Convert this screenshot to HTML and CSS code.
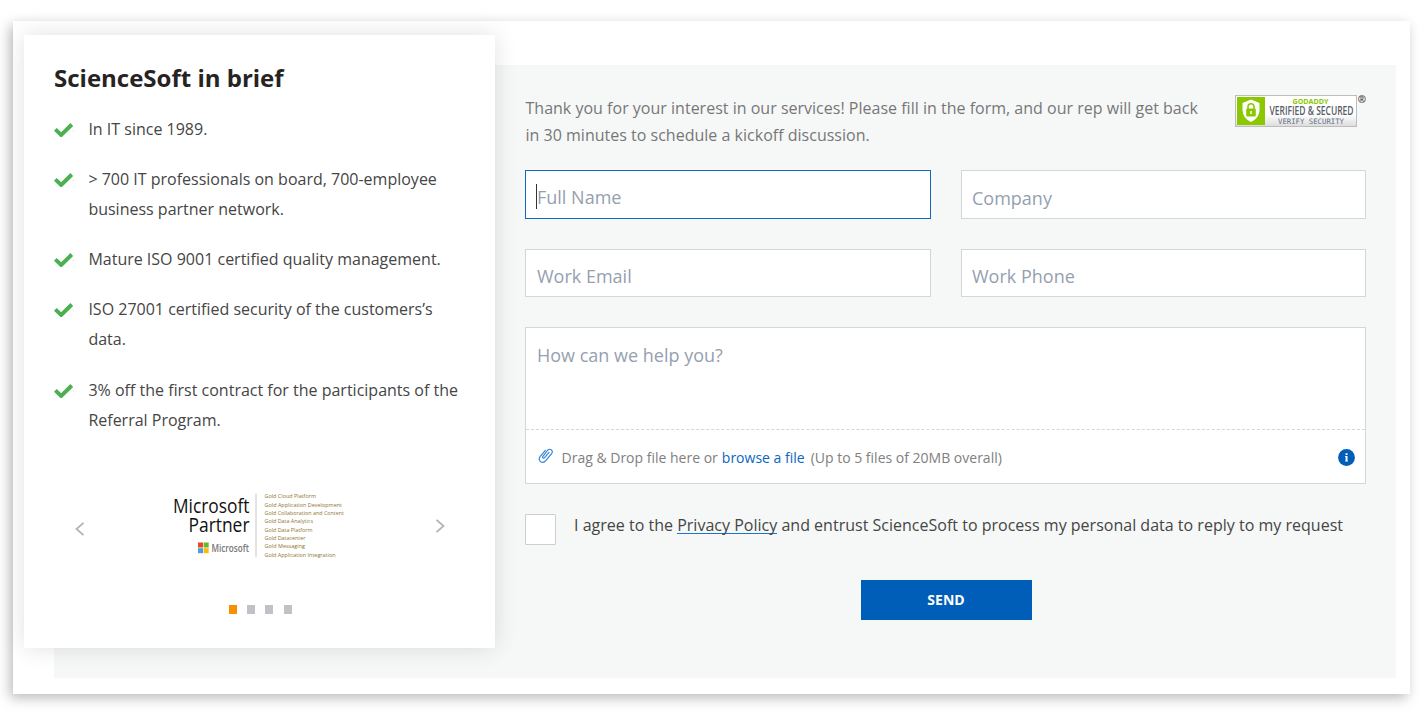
FILE: index.html
```html
<!DOCTYPE html>
<html lang="en">
<head>
<meta charset="utf-8">
<title>ScienceSoft contact form</title>
<link rel="stylesheet" href="styles.css">
</head>
<body>
<svg width="0" height="0" class="defs">
  <symbol id="check" viewBox="0 0 20 14"><path d="M1.300 6.300 7.200 12 17.800 1.500" fill="none" stroke="#4caf50" stroke-width="3.900"/><path d="M19.400 7.200v1" stroke="#a5d7a7" stroke-width=".7"/></symbol>
</svg>
<main class="frame">
  <section class="panel">
    <header class="intro">
      <p class="intro-text">Thank you for your interest in our services! Please fill in the form, and our rep will get back<br>in 30 minutes to schedule a kickoff discussion.</p>
      <svg class="seal" width="132" height="33" viewBox="0 0 132 33">
        <defs><linearGradient id="sg" x1="0" y1="0" x2="0" y2="1"><stop offset="0" stop-color="#fff"/><stop offset=".6" stop-color="#fff"/><stop offset="1" stop-color="#dcdcdc"/></linearGradient></defs>
        <rect x=".5" y=".5" width="121" height="31" fill="url(#sg)" stroke="#bdbdbd"/>
        <rect x="2" y="2" width="28" height="28" fill="#8cc800"/>
        <path d="M16 4.500 24.500 8v7.500q-.6 8-8.500 11.500Q8 23.500 7.500 15.500V8z" fill="#fff"/>
        <rect x="11.200" y="13.500" width="9.600" height="8" rx="1" fill="#8cc800"/>
        <path d="M13 14v-2.200a3 3 0 0 1 6 0V14" fill="none" stroke="#8cc800" stroke-width="1.600"/>
        <path d="M16 16v3" stroke="#fff" stroke-width="1.400"/>
        <text x="57.500" y="8.800" class="s1" textLength="36" lengthAdjust="spacingAndGlyphs">GODADDY</text>
        <text x="34.500" y="20" class="s2" textLength="84" lengthAdjust="spacingAndGlyphs">VERIFIED &amp; SECURED</text>
        <text x="43" y="28.700" class="s3" textLength="66" lengthAdjust="spacingAndGlyphs">VERIFY SECURITY</text>
        <text x="122.700" y="8.300" class="s4">®</text>
      </svg>
    </header>
    <div class="fields">
      <div class="field focus"><i class="caret"></i><span>Full Name</span></div>
      <div class="field"><span>Company</span></div>
      <div class="field"><span>Work Email</span></div>
      <div class="field"><span>Work Phone</span></div>
    </div>
    <div class="message">
      <div class="message-text">How can we help you?</div>
      <div class="upload">
        <svg class="clip" width="16" height="17" viewBox="0 0 16 17"><path d="M11 5.400 6.600 10.700c-1 1.200-2.700 0-1.700-1.300L9.500 3.400c2.100-2.600 6.200.1 4.300 2.900l-6 7.400c-3 3.600-8.600.3-5.900-3.800L7.300 3.400" fill="none" stroke="#3583d2" stroke-width="1.150" stroke-linecap="round"/></svg>
        <span>Drag &amp; Drop file here or</span>
        <a>browse a file</a>
        <span>(Up to 5 files of 20MB overall)</span>
        <svg class="info" width="17" height="17" viewBox="0 0 17 17"><circle cx="8.500" cy="8.500" r="8.400" fill="#005eb8"/><path d="M7.600 4.200h1.900v1.700H7.600zM7.100 7h2.400v4.400h.4v1.100H7.200v-1.100h.4V8.100h-.5z" fill="#fff"/></svg>
      </div>
    </div>
    <div class="consent"><span class="box"></span><p>I agree to the <a>Privacy Policy</a> and entrust ScienceSoft to process my personal data to reply to my request</p></div>
    <button class="send">SEND</button>
  </section>

  <aside class="card">
    <h2>ScienceSoft in brief</h2>
    <ul>
      <li><svg width="20" height="14"><use href="#check"/></svg><p>In IT since 1989.</p></li>
      <li><svg width="20" height="14"><use href="#check"/></svg><p>&gt; 700 IT professionals on board, 700-employee<br>business partner network.</p></li>
      <li><svg width="20" height="14"><use href="#check"/></svg><p>Mature ISO 9001 certified quality management.</p></li>
      <li><svg width="20" height="14"><use href="#check"/></svg><p>ISO 27001 certified security of the customers’s<br>data.</p></li>
      <li><svg width="20" height="14"><use href="#check"/></svg><p>3% off the first contract for the participants of the<br>Referral Program.</p></li>
    </ul>
    <div class="slider">
      <svg class="prev" width="10" height="16" viewBox="0 0 10 16"><path d="M8.500 1.800 1.500 8l7 6.200" fill="none" stroke="#b4b4b4" stroke-width="1.800"/></svg>
      <svg class="logo" width="176" height="68" viewBox="0 0 176 68">
        <g class="ms">
          <text x="1" y="21.600" textLength="76.500" lengthAdjust="spacingAndGlyphs">Microsoft</text>
          <text x="16.500" y="40.600" textLength="61" lengthAdjust="spacingAndGlyphs">Partner</text>
        </g>
        <path fill="#e8481f" d="M26 51.500h5.100v5H26z"/><path fill="#6db52d" d="M31.700 51.500h5v5h-5z"/><path fill="#4f9be0" d="M26 57.200h5.100v5H26z"/><path fill="#fbbc09" d="M31.700 57.200h5v5h-5z"/>
        <text x="39.500" y="60.700" class="msgrey" textLength="37.500" lengthAdjust="spacingAndGlyphs">Microsoft</text>
        <path d="M84 2.500v63.500" stroke="#dcdcdc" stroke-width="1.600"/>
        <g class="gold">
          <text x="92.500" y="7" textLength="51.500" lengthAdjust="spacingAndGlyphs">Gold Cloud Platform</text>
          <text x="92.500" y="15.500" textLength="77.500" lengthAdjust="spacingAndGlyphs">Gold Application Development</text>
          <text x="92.500" y="24" textLength="79.500" lengthAdjust="spacingAndGlyphs">Gold Collaboration and Content</text>
          <text x="92.500" y="32.200" textLength="48.500" lengthAdjust="spacingAndGlyphs">Gold Data Analytics</text>
          <text x="92.500" y="40.500" textLength="48" lengthAdjust="spacingAndGlyphs">Gold Data Platform</text>
          <text x="92.500" y="48.900" textLength="41" lengthAdjust="spacingAndGlyphs">Gold Datacenter</text>
          <text x="92.500" y="57.200" textLength="40.500" lengthAdjust="spacingAndGlyphs">Gold Messaging</text>
          <text x="92.500" y="65.500" textLength="71" lengthAdjust="spacingAndGlyphs">Gold Application Integration</text>
        </g>
      </svg>
      <svg class="next" width="10" height="16" viewBox="0 0 10 16"><path d="M1.500 1.800 8.500 8l-7 6.200" fill="none" stroke="#b4b4b4" stroke-width="1.800"/></svg>
    </div>
    <div class="dots"><i class="on"></i><i></i><i></i><i></i></div>
  </aside>
</main>
</body>
</html>
```
FILE: styles.css
```css
* { box-sizing: border-box; }
body { margin: 0; padding: 21px 13px 20px; height: 714px; background: #fff; font-family: "Open Sans", sans-serif; overflow: hidden; }
p, h2, ul { margin: 0; padding: 0; font-weight: 400; }
svg { display: block; flex: none; }
.defs { position: absolute; }

.frame { display: grid; grid-template-columns: 30px 441px 1fr; grid-template-rows: 30px 583px 30px; padding: 14px 14px 16px 11px; width: 1397px; background: #fff; box-shadow: -3px 4px 12px rgba(0, 0, 0, .27); }

.card { grid-area: 1 / 1 / 3 / 3; padding: 28px 30px 0; background: #fff; box-shadow: 0 0 22px rgba(0, 0, 0, .12); }
.card h2 { font-size: 24px; font-weight: 700; line-height: 30px; color: #262322; white-space: nowrap; }
.card ul { list-style: none; margin-top: 21px; display: flex; flex-direction: column; gap: 20px; }
.card li { display: flex; gap: 14px; font-size: 16px; line-height: 30.100px; color: #454545; white-space: nowrap; }
.card li svg { margin-top: 9px; }
.card li p { padding-left: .4px; }

.slider { display: flex; align-items: flex-start; margin: 56px 0 0 20px; }
.prev { margin: 30px 0 0 1px; }
.logo { margin-left: 87px; }
.next { margin: 27px 0 0 87px; }
.ms { fill: #111; font-size: 20px; }
.msgrey { font-size: 10px; fill: #777; font-weight: 600; }
.gold { font-size: 5.600px; fill: #8f7530; }
.dots { display: flex; gap: 10.200px; margin: 46px 0 0 175px; }
.dots i { width: 8px; height: 9px; background: #bfc2c7; }
.dots .on { background: #f79102; }

.panel { grid-area: 2 / 2 / 4 / 4; padding: 29px 30px 0 471px; background: #f6f8f7; }
.intro { display: flex; justify-content: space-between; height: 76px; }
.intro-text { padding: 1px 0 0 .5px; font-size: 16px; letter-spacing: .01px; line-height: 27px; color: #777; white-space: nowrap; }
.seal { margin: 1px -1px 0 0; overflow: visible; }
.s1 { font-size: 7px; font-weight: 700; fill: #8cc800; }
.s2 { font-size: 12px; font-weight: 600; fill: #555b66; }
.s3 { font-size: 7.500px; fill: #667086; font-family: "DejaVu Sans Mono", monospace; }
.s4 { font-size: 10px; font-weight: 700; fill: #444; }

.fields { display: grid; grid-template-columns: 1fr 1fr; gap: 30px; grid-template-rows: 49px 48px; }
.field, .message { background: #fff; border: 1px solid #d3d7db; }
.field { display: flex; align-items: center; padding: 6px 10px 0 11px; font-size: 18px; line-height: 26px; color: #959faf; }
.field:nth-child(even) { padding-left: 10.500px; }
.focus { padding: 5px 10px 0; border-color: #1268be; }
.caret { width: 1px; height: 25px; margin-top: -1px; background: #333; }
.message { margin-top: 30px; height: 157px; }
.message-text { height: 101px; padding: 14px 11px; font-size: 18px; line-height: 26px; color: #959faf; }
.upload { display: flex; align-items: center; height: 54px; border-top: 1px dashed #d3d7db; padding: 2px 11px 0 12px; font-size: 14px; color: #808080; white-space: nowrap; }
.clip { margin: -4px 7.500px 0 0; }
.upload a { color: #0a66bf; margin: 0 6px 0 4px; }
.info { margin: 0 -.5px 0 auto; }
.consent { display: flex; gap: 18px; margin-top: 30px; height: 66px; font-size: 16px; letter-spacing: .01px; line-height: 22px; color: #454545; white-space: nowrap; }
.box { width: 31px; height: 31px; flex: none; background: #fff; border: 1px solid #cbcfcd; border-radius: 1px; }
.consent a { display: inline-block; height: 20px; border-bottom: 1px solid #1f74c8; vertical-align: top; }
.send { display: block; width: 171px; height: 40px; margin: 0 0 0 336px; padding: 0 1px 1px 0; border: 0; background: #005eb8; color: #fff; font: 700 14px/39px "Open Sans", sans-serif; }
```
